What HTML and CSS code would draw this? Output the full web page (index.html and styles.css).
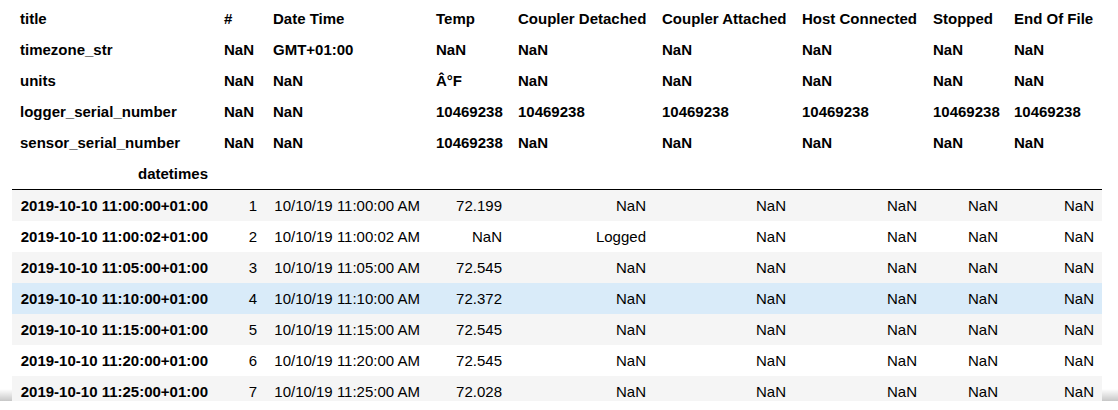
FILE: index.html
```html
<!DOCTYPE html>
<html>
<head>
<meta charset="utf-8">
<link rel="stylesheet" href="styles.css">
</head>
<body>
<div class="output">
<table class="df">
<colgroup>
<col class="c-idx"><col class="c-num"><col class="c-dt"><col class="c-temp"><col class="c-cd"><col class="c-ca"><col class="c-hc"><col class="c-st"><col class="c-eof">
</colgroup>
<thead>
<tr><th class="lvl">title</th><th>#</th><th>Date Time</th><th>Temp</th><th>Coupler Detached</th><th>Coupler Attached</th><th>Host Connected</th><th>Stopped</th><th>End Of File</th></tr>
<tr><th class="lvl">timezone_str</th><th>NaN</th><th>GMT+01:00</th><th>NaN</th><th>NaN</th><th>NaN</th><th>NaN</th><th>NaN</th><th>NaN</th></tr>
<tr><th class="lvl">units</th><th>NaN</th><th>NaN</th><th>Â°F</th><th>NaN</th><th>NaN</th><th>NaN</th><th>NaN</th><th>NaN</th></tr>
<tr><th class="lvl">logger_serial_number</th><th>NaN</th><th>NaN</th><th>10469238</th><th>10469238</th><th>10469238</th><th>10469238</th><th>10469238</th><th>10469238</th></tr>
<tr><th class="lvl">sensor_serial_number</th><th>NaN</th><th>NaN</th><th>10469238</th><th>NaN</th><th>NaN</th><th>NaN</th><th>NaN</th><th>NaN</th></tr>
<tr class="names"><th class="idxname">datetimes</th><th></th><th></th><th></th><th></th><th></th><th></th><th></th><th></th></tr>
</thead>
<tbody>
<tr><th>2019-10-10 11:00:00+01:00</th><td>1</td><td>10/10/19 11:00:00 AM</td><td>72.199</td><td>NaN</td><td>NaN</td><td>NaN</td><td>NaN</td><td>NaN</td></tr>
<tr><th>2019-10-10 11:00:02+01:00</th><td>2</td><td>10/10/19 11:00:02 AM</td><td>NaN</td><td>Logged</td><td>NaN</td><td>NaN</td><td>NaN</td><td>NaN</td></tr>
<tr><th>2019-10-10 11:05:00+01:00</th><td>3</td><td>10/10/19 11:05:00 AM</td><td>72.545</td><td>NaN</td><td>NaN</td><td>NaN</td><td>NaN</td><td>NaN</td></tr>
<tr class="hover"><th>2019-10-10 11:10:00+01:00</th><td>4</td><td>10/10/19 11:10:00 AM</td><td>72.372</td><td>NaN</td><td>NaN</td><td>NaN</td><td>NaN</td><td>NaN</td></tr>
<tr><th>2019-10-10 11:15:00+01:00</th><td>5</td><td>10/10/19 11:15:00 AM</td><td>72.545</td><td>NaN</td><td>NaN</td><td>NaN</td><td>NaN</td><td>NaN</td></tr>
<tr><th>2019-10-10 11:20:00+01:00</th><td>6</td><td>10/10/19 11:20:00 AM</td><td>72.545</td><td>NaN</td><td>NaN</td><td>NaN</td><td>NaN</td><td>NaN</td></tr>
<tr><th>2019-10-10 11:25:00+01:00</th><td>7</td><td>10/10/19 11:25:00 AM</td><td>72.028</td><td>NaN</td><td>NaN</td><td>NaN</td><td>NaN</td><td>NaN</td></tr>
</tbody>
</table>
</div>
</body>
</html>
```
FILE: styles.css
```css
html, body {
  margin: 0;
  padding: 0;
  background: #fff;
}

.output {
  position: relative;
  height: 401px;
  overflow: hidden;
  padding: 3px 0 0 12px;
  box-sizing: border-box;
  font-family: "Liberation Sans", Arial, sans-serif;
  font-size: 15px;
  color: #000;
}

.output::after {
  content: "";
  position: absolute;
  left: 0;
  right: 0;
  bottom: 0;
  height: 12px;
  background: linear-gradient(to bottom, rgba(0,0,0,0), rgba(0,0,0,0.22));
  z-index: 0;
}

.df {
  position: relative;
  z-index: 1;
  table-layout: fixed;
  width: 1090px;
  border-collapse: separate;
  border-spacing: 0;
}

.c-idx { width: 204px; }
.c-num { width: 49px; }
.c-dt { width: 163px; }
.c-temp { width: 82px; }
.c-cd { width: 144px; }
.c-ca { width: 140px; }
.c-hc { width: 131px; }
.c-st { width: 81px; }
.c-eof { width: 96px; }

.df th, .df td {
  height: 31px;
  padding: 0 8px;
  line-height: 17px;
  box-sizing: border-box;
  vertical-align: middle;
  white-space: nowrap;
}

.df thead th {
  text-align: left;
  font-weight: bold;
  background: #fff;
}

.df thead th.idxname {
  text-align: right;
}

.df thead tr.names th {
  height: 32px;
  border-bottom: 1px solid #000;
}

.df tbody th {
  text-align: right;
  font-weight: bold;
}

.df tbody td {
  text-align: right;
  font-weight: normal;
}

.df tbody tr {
  background: #fff;
}

.df tbody tr:nth-child(odd) {
  background: #f5f5f5;
}

.df tbody tr.hover {
  background: #d9ebf9;
}
```
